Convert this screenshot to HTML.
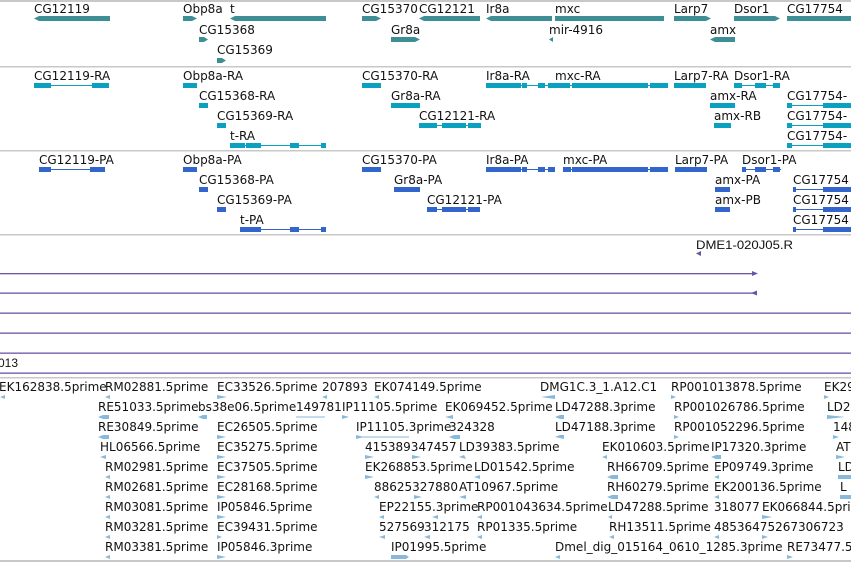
<!DOCTYPE html>
<html><head><meta charset="utf-8"><style>
html,body{margin:0;padding:0;background:#fff;width:851px;height:562px;overflow:hidden}
svg{display:block}
text{font-family:"DejaVu Sans","Liberation Sans",sans-serif;font-size:12px;fill:#111}
.t1{fill:#3d8f95}.t2{fill:#0aa0c0}.t3{fill:#3366cc}.p{fill:#6b55a3}.lb{fill:#86b9dc}
</style></head><body>
<svg width="851" height="562" xmlns="http://www.w3.org/2000/svg">
<g fill="#c8c8c8">
<rect x="0" y="0" width="851" height="2"/><rect x="0" y="66" width="851" height="1.5"/>
<rect x="0" y="150" width="851" height="1.5"/><rect x="0" y="234" width="851" height="1.5"/>
<rect x="0" y="377" width="851" height="1.5"/><rect x="0" y="560" width="851" height="2"/>
</g>
<!-- track 1 -->
<g class="t1">
<polygon points="34,18.5 39,16 110,16 110,21 39,21"/>
<polygon points="183,16 192,16 197,18.5 192,21 183,21"/>
<polygon points="230,18.5 235,16 326,16 326,21 235,21"/>
<polygon points="199,37 204,37 208,39.5 204,42 199,42"/>
<polygon points="217,58 222,58 226,60.5 222,63 217,63"/>
<polygon points="362,16 376,16 381,18.5 376,21 362,21"/>
<polygon points="419,18.5 424,16 480,16 480,21 424,21"/>
<polygon points="391,37 415,37 420,39.5 415,42 391,42"/>
<polygon points="486,18.5 491,16 552,16 552,21 491,21"/>
<polygon points="555,16 664,16 664,21 555,21"/>
<polygon points="549,39.5 553,37 553,42"/>
<polygon points="674,16 706,16 711,18.5 706,21 674,21"/>
<polygon points="734,16 775,16 780,18.5 775,21 734,21"/>
<polygon points="710,39.5 715,37 735,37 735,42 715,42"/>
<rect x="787" y="16" width="64" height="5"/>
</g>
<text x="34" y="13">CG12119</text><text x="183" y="13">Obp8a</text><text x="230" y="13">t</text>
<text x="199" y="34">CG15368</text><text x="217" y="54">CG15369</text>
<text x="362" y="13">CG15370</text><text x="419" y="13">CG12121</text><text x="391" y="34">Gr8a</text>
<text x="486" y="13">Ir8a</text><text x="555" y="13">mxc</text><text x="549" y="34">mir-4916</text>
<text x="674" y="13">Larp7</text><text x="734" y="13">Dsor1</text><text x="710" y="34">amx</text><text x="787" y="13">CG17754</text>
<!-- track 2 -->
<g class="t2">
<rect x="34" y="85" width="75" height="1"/><rect x="34" y="83" width="17" height="5"/><rect x="92" y="83" width="17" height="5"/>
<rect x="183" y="83" width="14" height="5"/><rect x="199" y="103" width="9" height="5"/><rect x="217" y="123" width="9" height="5"/>
<rect x="230" y="145" width="96" height="1"/><rect x="230" y="143" width="15" height="5"/><rect x="246" y="143" width="15" height="5"/><rect x="290" y="143" width="9" height="5"/><rect x="321" y="143" width="5" height="5"/>
<rect x="362" y="83" width="19" height="5"/>
<rect x="391" y="103" width="29" height="5"/>
<rect x="419" y="125" width="62" height="1"/><rect x="419" y="123" width="18" height="5"/><rect x="442" y="123" width="24" height="5"/><rect x="468" y="123" width="13" height="5"/>
<rect x="486" y="85" width="69" height="1"/><rect x="486" y="83" width="35" height="5"/><rect x="522" y="83" width="5" height="5"/><rect x="538" y="83" width="7" height="5"/><rect x="548" y="83" width="7" height="5"/>
<rect x="555" y="85" width="113" height="1"/><rect x="555" y="83" width="15" height="5"/><rect x="572" y="83" width="76" height="5"/><rect x="650" y="83" width="18" height="5"/>
<rect x="674" y="83" width="32" height="5"/>
<rect x="734" y="85" width="46" height="1"/><rect x="734" y="83" width="8" height="5"/><rect x="755" y="83" width="11" height="5"/><rect x="773" y="83" width="7" height="5"/>
<rect x="710" y="103" width="25" height="5"/><rect x="714" y="123" width="17" height="5"/>
<rect x="787" y="105" width="64" height="1"/><rect x="787" y="103" width="5" height="5"/><rect x="823" y="103" width="28" height="5"/>
<rect x="787" y="125" width="64" height="1"/><rect x="787" y="123" width="5" height="5"/><rect x="823" y="123" width="28" height="5"/>
<rect x="787" y="145" width="64" height="1"/><rect x="787" y="143" width="5" height="5"/><rect x="823" y="143" width="28" height="5"/>
</g>
<text x="34" y="80">CG12119-RA</text><text x="183" y="80">Obp8a-RA</text><text x="199" y="100">CG15368-RA</text><text x="217" y="120">CG15369-RA</text><text x="230" y="140">t-RA</text>
<text x="362" y="80">CG15370-RA</text><text x="391" y="100">Gr8a-RA</text><text x="419" y="120">CG12121-RA</text>
<text x="486" y="80">Ir8a-RA</text><text x="555" y="80">mxc-RA</text><text x="674" y="80">Larp7-RA</text><text x="734" y="80">Dsor1-RA</text>
<text x="710" y="100">amx-RA</text><text x="714" y="120">amx-RB</text>
<text x="787" y="100">CG17754-</text><text x="787" y="120">CG17754-</text><text x="787" y="140">CG17754-</text>
<!-- track 3 -->
<g class="t3">
<rect x="39" y="169" width="66" height="1"/><rect x="39" y="167" width="12" height="5"/><rect x="90" y="167" width="15" height="5"/>
<rect x="183" y="167" width="14" height="5"/><rect x="199" y="187" width="9" height="5"/><rect x="217" y="207" width="9" height="5"/>
<rect x="240" y="229" width="86" height="1"/><rect x="240" y="227" width="21" height="5"/><rect x="290" y="227" width="9" height="5"/><rect x="321" y="227" width="5" height="5"/>
<rect x="362" y="167" width="19" height="5"/>
<rect x="394" y="187" width="26" height="5"/>
<rect x="427" y="209" width="53" height="1"/><rect x="427" y="207" width="10" height="5"/><rect x="442" y="207" width="24" height="5"/><rect x="468" y="207" width="12" height="5"/>
<rect x="486" y="169" width="69" height="1"/><rect x="486" y="167" width="35" height="5"/><rect x="522" y="167" width="5" height="5"/><rect x="538" y="167" width="7" height="5"/><rect x="548" y="167" width="7" height="5"/>
<rect x="563" y="169" width="105" height="1"/><rect x="563" y="167" width="8" height="5"/><rect x="572" y="167" width="76" height="5"/><rect x="650" y="167" width="18" height="5"/>
<rect x="675" y="167" width="32" height="5"/>
<rect x="742" y="169" width="39" height="1"/><rect x="742" y="167" width="4" height="5"/><rect x="755" y="167" width="11" height="5"/><rect x="773" y="167" width="7" height="5"/>
<rect x="715" y="187" width="15" height="5"/><rect x="715" y="207" width="15" height="5"/>
<rect x="793" y="189" width="58" height="1"/><rect x="793" y="187" width="3" height="5"/><rect x="823" y="187" width="28" height="5"/>
<rect x="793" y="209" width="58" height="1"/><rect x="793" y="207" width="3" height="5"/><rect x="823" y="207" width="28" height="5"/>
<rect x="793" y="229" width="58" height="1"/><rect x="793" y="227" width="3" height="5"/><rect x="823" y="227" width="28" height="5"/>
</g>
<text x="39" y="164">CG12119-PA</text><text x="183" y="164">Obp8a-PA</text><text x="199" y="184">CG15368-PA</text><text x="217" y="204">CG15369-PA</text><text x="240" y="224">t-PA</text>
<text x="362" y="164">CG15370-PA</text><text x="394" y="184">Gr8a-PA</text><text x="427" y="204">CG12121-PA</text>
<text x="486" y="164">Ir8a-PA</text><text x="563" y="164">mxc-PA</text><text x="675" y="164">Larp7-PA</text><text x="742" y="164">Dsor1-PA</text>
<text x="715" y="184">amx-PA</text><text x="715" y="204">amx-PB</text>
<text x="793" y="184">CG17754</text><text x="793" y="204">CG17754</text><text x="793" y="224">CG17754</text>
<!-- track 4 -->
<text x="696" y="249" textLength="97" lengthAdjust="spacingAndGlyphs" style="font-family:'Liberation Sans',sans-serif;font-size:12px">DME1-020J05.R</text>
<g class="p">
<polygon points="696,253.5 701,251 701,256"/>
<rect x="0" y="273" width="753" height="1.3"/><polygon points="752,271 758,273.5 752,276"/>
<rect x="0" y="292.5" width="757" height="1.3"/><polygon points="751,293 757,290.5 757,295.5"/>
<rect x="0" y="312.5" width="851" height="1.3"/><rect x="0" y="332.5" width="851" height="1.3"/>
<rect x="0" y="352.5" width="851" height="1.3"/><rect x="0" y="372.5" width="851" height="1.3"/>
</g>
<text x="-2" y="367" textLength="20" lengthAdjust="spacingAndGlyphs" style="font-family:'Liberation Sans',sans-serif">013</text>
<!-- bottom track -->
<g class="lb">
<polygon points="0,397 5,395 5,399"/><polygon points="105,397 110,395 110,399"/><polygon points="217,395 227,397 217,399"/><polygon points="322,397 327,395 327,399"/><polygon points="374,397 379,395 379,399"/><polygon points="541,397 555,395 555,399"/><polygon points="671,395 676,397 671,399"/><polygon points="824,395 829,397 824,399"/>
<polygon points="98,417 103,415 109,415 109,419 103,419"/><polygon points="198,417 203,415 207,415 207,419 203,419"/><rect x="296" y="416.5" width="29" height="1"/><polygon points="342,415 349,417 342,419"/><polygon points="445,417 453,415 453,419"/><polygon points="555,417 560,415 564,415 564,419 560,419"/><polygon points="674,415 679,417 674,419"/><polygon points="827,415 845,417 827,419"/>
<polygon points="98,437 103,435 109,435 109,439 103,439"/><polygon points="217,435 226,437 217,439"/><rect x="356" y="436.5" width="53" height="1"/><polygon points="356,435 364,437 356,439"/><polygon points="449,437 454,435 460,435 460,439 454,439"/><polygon points="555,437 560,435 564,435 564,439"/><polygon points="674,435 679,437 674,439"/><polygon points="833,435 839,437 833,439"/>
<polygon points="100,457 106,455 106,459"/><polygon points="217,455 226,457 217,459"/><polygon points="365,455 374,457 365,459"/><polygon points="412,455 421,457 412,459"/><polygon points="459,457 464,455 466,459"/><polygon points="602,457 607,455 607,459"/><polygon points="711,457 716,455 721,455 721,459 716,459"/><polygon points="836,455 845,457 836,459"/>
<polygon points="105,477 110,475 110,479"/><polygon points="217,475 226,477 217,479"/><polygon points="365,475 374,477 365,479"/><polygon points="474,477 480,475 480,479"/><polygon points="607,477 612,475 618,475 618,479 612,479"/><polygon points="714,477 719,475 719,479"/><polygon points="838,475 851,475 851,479 838,479"/>
<polygon points="105,497 110,495 110,499"/><polygon points="217,495 226,497 217,499"/><polygon points="374,497 379,495 379,499"/><polygon points="414,495 422,497 414,499"/><polygon points="459,497 466,495 466,499"/><polygon points="607,497 612,495 618,495 618,499 612,499"/><polygon points="714,497 719,495 719,499"/><polygon points="840,495 851,495 851,499 840,499"/>
<polygon points="105,517 110,515 110,519"/><polygon points="217,515 226,517 217,519"/><polygon points="379,517 384,515 384,519"/><polygon points="432,517 438,515 438,519"/><polygon points="477,517 482,515 482,519"/><polygon points="608,517 612,515 612,519"/><polygon points="762,515 772,517 762,519"/>
<polygon points="105,537 110,535 110,539"/><polygon points="217,535 222,537 217,539"/><polygon points="379,537 385,535 385,539"/><polygon points="424,537 430,535 430,539"/><polygon points="477,537 482,535 482,539"/><polygon points="609,537 614,535 614,539"/><polygon points="714,537 719,535 719,539"/><polygon points="762,535 768,537 762,539"/>
<polygon points="105,557 110,555 110,559"/><polygon points="217,555 226,557 217,559"/><polygon points="391,555 406,555 409,557 406,559 391,559"/><polygon points="555,557 560,555 560,559"/><polygon points="787,555 793,557 787,559"/>
</g>
<g>
<text x="-1" y="391">EK162838.5prime</text><text x="105" y="391">RM02881.5prime</text><text x="217" y="391">EC33526.5prime</text><text x="322" y="391">207893</text><text x="374" y="391">EK074149.5prime</text><text x="540" y="391">DMG1C.3_1.A12.C1</text><text x="671" y="391">RP001013878.5prime</text><text x="824" y="391">EK29</text>
<text x="98" y="411">RE51033.5prime</text><text x="198" y="411">bs38e06.5prime</text><text x="296" y="411">149781</text><text x="342" y="411">IP11105.5prime</text><text x="445" y="411">EK069452.5prime</text><text x="555" y="411">LD47288.3prime</text><text x="674" y="411">RP001026786.5prime</text><text x="827" y="411">LD2</text>
<text x="98" y="431">RE30849.5prime</text><text x="217" y="431">EC26505.5prime</text><text x="356" y="431">IP11105.3prime</text><text x="449" y="431">324328</text><text x="555" y="431">LD47188.3prime</text><text x="674" y="431">RP001052296.5prime</text><text x="833" y="431">148</text>
<text x="100" y="451">HL06566.5prime</text><text x="217" y="451">EC35275.5prime</text><text x="365" y="451">415389347457</text><text x="459" y="451">LD39383.5prime</text><text x="602" y="451">EK010603.5prime</text><text x="711" y="451">IP17320.3prime</text><text x="836" y="451">AT</text>
<text x="105" y="471">RM02981.5prime</text><text x="217" y="471">EC37505.5prime</text><text x="365" y="471">EK268853.5prime</text><text x="474" y="471">LD01542.5prime</text><text x="607" y="471">RH66709.5prime</text><text x="714" y="471">EP09749.3prime</text><text x="838" y="471">LD</text>
<text x="105" y="491">RM02681.5prime</text><text x="217" y="491">EC28168.5prime</text><text x="374" y="491">88625327880</text><text x="459" y="491">AT10967.5prime</text><text x="607" y="491">RH60279.5prime</text><text x="714" y="491">EK200136.5prime</text><text x="840" y="491">L</text>
<text x="105" y="511">RM03081.5prime</text><text x="217" y="511">IP05846.5prime</text><text x="379" y="511">EP22155.3prime</text><text x="477" y="511">RP001043634.5prime</text><text x="608" y="511">LD47288.5prime</text><text x="714" y="511">318077</text><text x="762" y="511">EK066844.5prime</text>
<text x="105" y="531">RM03281.5prime</text><text x="217" y="531">EC39431.5prime</text><text x="379" y="531">527569</text><text x="424" y="531">312175</text><text x="477" y="531">RP01335.5prime</text><text x="609" y="531">RH13511.5prime</text><text x="714" y="531">48536475267306723</text>
<text x="105" y="551">RM03381.5prime</text><text x="217" y="551">IP05846.3prime</text><text x="391" y="551">IP01995.5prime</text><text x="555" y="551">Dmel_dig_015164_0610_1285.3prime</text><text x="787" y="551">RE73477.5</text>
</g>
</svg>
</body></html>
